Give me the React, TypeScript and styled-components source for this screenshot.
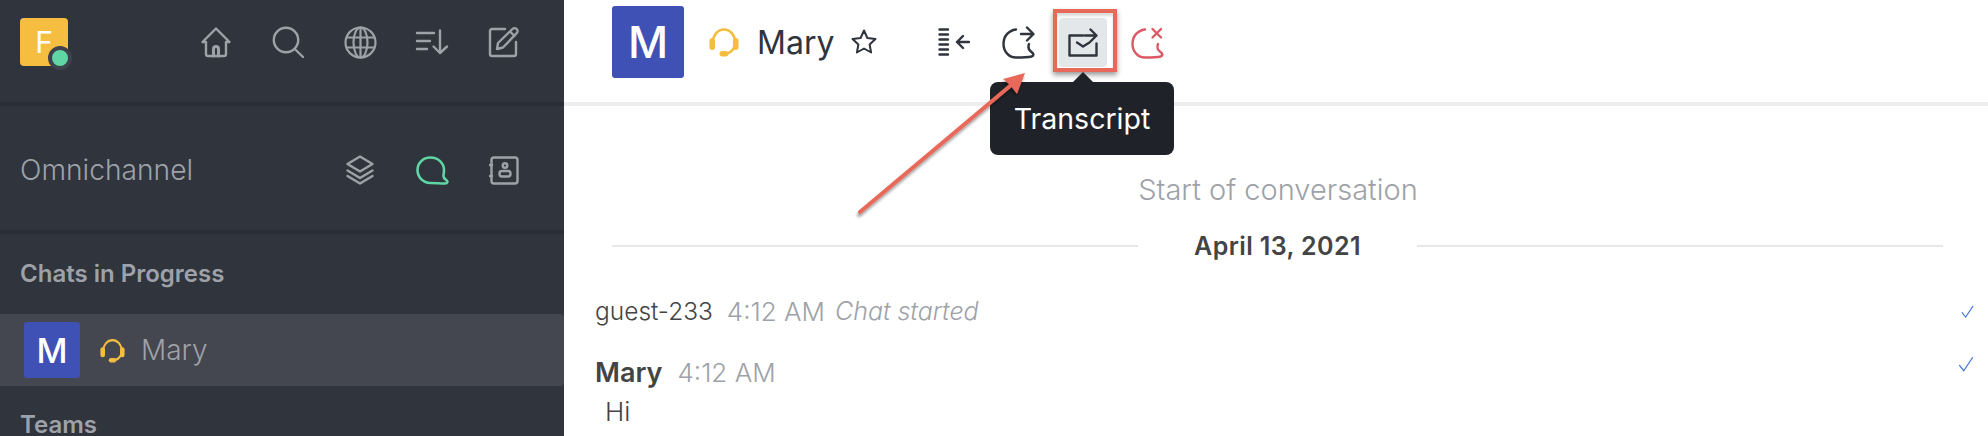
import React from "react";
import styled, { createGlobalStyle } from "styled-components";

const Global = createGlobalStyle`
  html, body { margin: 0; padding: 0; background: #fff; overflow: hidden; }
  body { font-family: Inter, "Liberation Sans", sans-serif; }
  * { box-sizing: border-box; }
`;

const Page = styled.div`
  position: relative;
  display: flex;
  width: 1988px;
  height: 436px;
  overflow: hidden;
`;

const Sidebar = styled.aside`
  width: 564px;
  flex: none;
  background: #30343d;
  color: #9ea2a8;
`;

const SideBar = styled.div<{ $h: number; $pt: number; $pb: number }>`
  height: ${(p) => p.$h}px;
  display: flex;
  align-items: center;
  justify-content: space-between;
  padding: ${(p) => p.$pt}px 42px ${(p) => p.$pb}px 20px;
  border-bottom: 4px solid #2a2d35;
`;

const IconRow = styled.div`
  display: flex;
  align-items: center;
  gap: 36px;
`;

const IconBox = styled.span<{ $c?: string }>`
  width: 36px;
  height: 36px;
  display: flex;
  align-items: center;
  justify-content: center;
  color: ${(p) => p.$c || "#9ea2a8"};
`;

const HeadsetSlot = styled.span<{ $ml: number; $mr: number }>`
  display: flex;
  flex: none;
  color: #f3bd3f;
  margin: 0 ${(p) => p.$mr}px 0 ${(p) => p.$ml}px;
`;

const Logo = styled.div`
  position: relative;
  width: 48px;
  height: 48px;
  border-radius: 4px;
  background: #f5be41;
  color: #fff;
  font-size: 30px;
  font-weight: 400;
  display: flex;
  align-items: center;
  justify-content: center;
`;

const StatusDot = styled.span`
  position: absolute;
  right: -4px;
  bottom: -4px;
  width: 24px;
  height: 24px;
  border-radius: 50%;
  background: #5fd6a4;
  border: 4px solid #3d424c;
`;

const SectionTitle = styled.h1`
  margin: 0;
  font-size: 28.2px;
  font-weight: 300;
  color: #9ea2a8;
`;

const GroupLabel = styled.div<{ $top: number }>`
  margin: ${(p) => p.$top}px 0 0 20px;
  font-size: 24px;
  line-height: 22px;
  font-weight: 600;
  color: #9ea2a8;
`;

const RoomRow = styled.div`
  height: 72px;
  margin-top: 29px;
  display: flex;
  align-items: center;
  padding-left: 24px;
  background: #444650;
  border-radius: 0 4px 4px 0;
  font-size: 28px;
  font-weight: 300;
  color: #9ea2a8;
`;

const Avatar = styled.div<{ $size: number; $font: number }>`
  width: ${(p) => p.$size}px;
  height: ${(p) => p.$size}px;
  flex: none;
  display: flex;
  align-items: center;
  justify-content: center;
  border-radius: 3px;
  background: #4051b5;
  color: #fff;
  font-size: ${(p) => p.$font}px;
  font-weight: 500;
`;

const Main = styled.main`
  flex: 1;
  min-width: 0;
  display: flex;
  flex-direction: column;
`;

const Header = styled.header`
  height: 106px;
  flex: none;
  display: flex;
  align-items: center;
  padding: 0 0 18px 48px;
  border-bottom: 4px solid #eceef0;
  color: #2f343d;
`;

const HeaderName = styled.span`
  margin-right: 17px;
  font-size: 32px;
  font-weight: 400;
`;

const Tools = styled.div`
  display: flex;
  align-items: center;
  gap: 16.5px;
  margin-left: 53px;
`;

const Tool = styled.button<{ $active?: boolean; $c?: string }>`
  width: 48px;
  height: 49px;
  padding: 0;
  display: flex;
  align-items: center;
  justify-content: center;
  position: relative;
  background: ${(p) => (p.$active ? "#e4e7ea" : "transparent")};
  border: 0;
  border-radius: 4px;
  color: ${(p) => p.$c || "#2f343d"};
`;

const Outline = styled.span`
  position: absolute;
  left: -6px;
  top: -9px;
  width: 64px;
  height: 63px;
  border: 4px solid #e8695a;
  box-shadow: 0 3px 5px rgba(0, 0, 0, 0.4), inset 0 3px 3px rgba(0, 0, 0, 0.15);
`;

const Tooltip = styled.div`
  position: absolute;
  left: 990px;
  top: 82px;
  width: 184px;
  height: 73px;
  display: flex;
  align-items: center;
  justify-content: center;
  background: #1f2329;
  border-radius: 8px;
  color: #fff;
  font-size: 28.5px;
  font-weight: 400;
  &::before {
    content: "";
    position: absolute;
    left: 81px;
    top: -10px;
    border: 12px solid transparent;
    border-top: 0;
    border-bottom-color: #1f2329;
  }
`;

const ArrowLayer = styled.svg`
  position: absolute;
  left: 0;
  top: 0;
  pointer-events: none;
`;

const Body = styled.section`
  flex: 1;
  padding: 0 13px 0 31px;
`;

const Start = styled.div`
  margin-top: 65px;
  text-align: center;
  padding-right: 14px;
  font-size: 29px;
  line-height: 38px;
  font-weight: 300;
  color: #9ea2a8;
`;

const DateRule = styled.div`
  margin: 17px 32px 0 17px;
  display: flex;
  align-items: center;
  gap: 56px;
  font-size: 25px;
  line-height: 40px;
  font-weight: 600;
  color: #444;
  letter-spacing: 0.4px;
  &::before,
  &::after {
    content: "";
    flex: 1;
    height: 2px;
    background: #e7e7e7;
  }
`;

const Line = styled.div<{ $top: number }>`
  margin-top: ${(p) => p.$top}px;
  display: flex;
  align-items: center;
  height: 36px;
  font-size: 24px;
  color: #444;
  font-weight: 300;
`;

const Name = styled.span<{ $bold?: boolean }>`
  font-weight: ${(p) => (p.$bold ? 600 : 300)};
  font-size: ${(p) => (p.$bold ? 27 : 24.5)}px;
  margin-right: ${(p) => (p.$bold ? 15 : 14)}px;
`;

const Time = styled.span`
  color: #9ea2a8;
  font-size: 26px;
  margin-right: 10px;
`;

const Italic = styled.span`
  color: #9ea2a8;
  font-size: 25px;
  font-style: italic;
`;

const Check = styled.span<{ $mb?: number }>`
  margin: 0 0 ${(p) => p.$mb || 0}px auto;
  display: flex;
  color: #3f74d6;
`;

const MsgText = styled.div`
  margin: 4px 0 0 10px;
  font-size: 26px;
  line-height: 36px;
  font-weight: 300;
  color: #444;
`;

const S = {
  fill: "none",
  stroke: "currentColor",
  strokeWidth: 2.4,
  strokeLinecap: "round" as const,
  strokeLinejoin: "round" as const,
};

const Home = () => (
  <svg width="32" height="32" viewBox="0 0 32 32" {...S}>
    <path d="M16 2.5 L29.5 16 H26 V28 a2 2 0 0 1 -2 2 H8 a2 2 0 0 1 -2 -2 V16 H2.5 Z" />
    <path d="M13.5 30 V23 a2.5 2.5 0 0 1 5 0 V30" strokeWidth={3} />
  </svg>
);
const Search = () => (
  <svg width="32" height="32" viewBox="0 0 32 32" {...S}>
    <circle cx="14" cy="14" r="12.2" />
    <path d="M22.8 23 L31 31" />
  </svg>
);
const Globe = () => (
  <svg width="33" height="33" viewBox="0 0 33 33" {...S} strokeWidth={2.2}>
    <circle cx="16.5" cy="16.5" r="15" />
    <ellipse cx="16.5" cy="16.5" rx="7" ry="15" />
    <path d="M3 11.5 H30 M3 21.5 H30 M16.5 1.5 V31.5" />
  </svg>
);
const Sort = () => (
  <svg width="34" height="26" viewBox="0 0 34 26" {...S}>
    <path d="M2 4 H19 M2 12 H15 M2 20 H12 M25 1.5 V24 M18.5 17.5 L25 24 L32 17.5" />
  </svg>
);
const Edit = () => (
  <svg width="32" height="32" viewBox="0 0 32 32" {...S}>
    <path d="M17 3 H4 a2 2 0 0 0 -2 2 V28 a2 2 0 0 0 2 2 H26 a2 2 0 0 0 2 -2 V16" />
    <path d="M9 23 L10 17 L24.5 3 a2.8 2.8 0 0 1 4.2 4.2 L15 21.5 Z M22 5.5 L26.5 10" />
  </svg>
);
const Layers = () => (
  <svg width="28" height="30" viewBox="0 0 28 30" {...S}>
    <path d="M14 1.5 L26.5 9 L14 16.5 L1.5 9 Z M1.5 15.5 L14 23 L26.5 15.5 M1.5 21 L14 28.5 L26.5 21" />
  </svg>
);
const Bubble = () => (
  <svg width="33" height="29" viewBox="0 0 33 29" {...S} strokeWidth={2.6}>
    <path d="M14.5 1.5 C6.5 1.5 1.5 7.5 1.5 14 C1.5 21 7 27 14.5 27 C19 27 24 27.5 29 27.5 C31.8 27.5 32 25.3 30.2 24 C28 22.5 27 21 27.5 19 C27.8 17.5 28 16 28 14 C28 7 22 1.5 14.5 1.5 Z" />
  </svg>
);
const Contacts = () => (
  <svg width="30" height="29" viewBox="0 0 30 29" {...S}>
    <rect x="2.5" y="1.5" width="26" height="26" rx="2.5" />
    <path d="M1 9 H3 M1 20 H3" strokeWidth={2.6} />
    <circle cx="16" cy="9.5" r="2.3" />
    <rect x="10.5" y="15" width="11" height="5.5" rx="2.5" />
  </svg>
);
const Headset = ({ size }: { size: number }) => (
  <svg width={size} height={size} viewBox="0 0 30 30">
    <path d="M4 15 C4 8 9 2.5 15 2.5 C21 2.5 26 8 26 15 C26 21 23 25 18 26.5" fill="none" stroke="currentColor" strokeWidth="2.6" />
    <rect x="0.5" y="11" width="5.5" height="12" rx="2.7" fill="currentColor" />
    <rect x="24" y="11" width="5.5" height="12" rx="2.7" fill="currentColor" />
    <rect x="10.5" y="24" width="9" height="5.5" rx="2.7" fill="currentColor" />
  </svg>
);
const Star = () => (
  <svg width="26" height="26" viewBox="0 0 26 26" {...S} strokeWidth={2}>
    <path d="M13 1.5 L16.4 9 L24.5 10 L18.6 15.5 L20.1 23.5 L13 19.5 L5.9 23.5 L7.4 15.5 L1.5 10 L9.6 9 Z" />
  </svg>
);
const ListBack = () => (
  <svg width="32" height="28" viewBox="0 0 32 28" {...S}>
    <path d="M1.5 1.5 H10 M1.5 6.5 H10 M1.5 11.5 H10 M1.5 16.5 H10 M1.5 21.5 H10 M1.5 26.5 H10" />
    <path d="M19 14 H31 M25 8 L19 14 L25 20" />
  </svg>
);
const ChatForward = () => (
  <svg width="34" height="33" viewBox="0 0 34 33" {...S}>
    <path d="M14 3.5 C6.5 4.5 1.5 10 1.5 18 C1.5 25.5 7 31.5 14 31.5 C19 31.5 25 31.5 29.5 30.5 C32.5 29.5 31.5 27.5 29.5 26 C26.5 24 25.5 22 27 18" />
    <path d="M19 8 H31 M25 1.5 L31.5 8 L25 14.5" />
  </svg>
);
const TranscriptIcon = () => (
  <svg width="30" height="29" viewBox="0 0 30 29" {...S}>
    <path d="M15 7.5 H1.5 V27.5 H28.5 V15.5" />
    <path d="M17 7.5 H28 M22.5 1.5 L28.5 7.5 L22.5 13.5" />
    <path d="M9 14.5 L15 18.5 L21.5 14.5" />
  </svg>
);
const ChatClose = () => (
  <svg width="34" height="33" viewBox="0 0 34 33" {...S}>
    <path d="M14 3.5 C6.5 4.5 1.5 10 1.5 18 C1.5 25.5 7 31.5 14 31.5 C19 31.5 25 31.5 29.5 30.5 C32.5 29.5 31.5 27.5 29.5 26 C26.5 24 25.5 22 27 18" />
    <path d="M21.5 3 L30 11.5 M30 3 L21.5 11.5" />
  </svg>
);
const Tick = ({ size }: { size: number }) => (
  <svg width={size} height={size} viewBox="0 0 16 16" fill="none" stroke="currentColor" strokeWidth="1.1">
    <path d="M2 9 L6 14 L14 2" />
  </svg>
);

export default function App() {
  return (
    <Page>
      <Global />
      <Sidebar>
        <SideBar $h={106} $pt={0} $pb={18}>
          <Logo>
            F
            <StatusDot />
          </Logo>
          <IconRow>
            <IconBox><Home /></IconBox>
            <IconBox><Search /></IconBox>
            <IconBox><Globe /></IconBox>
            <IconBox><Sort /></IconBox>
            <IconBox><Edit /></IconBox>
          </IconRow>
        </SideBar>
        <SideBar $h={128} $pt={4} $pb={0}>
          <SectionTitle>Omnichannel</SectionTitle>
          <IconRow>
            <IconBox><Layers /></IconBox>
            <IconBox $c="#5fd6a4"><Bubble /></IconBox>
            <IconBox><Contacts /></IconBox>
          </IconRow>
        </SideBar>
        <GroupLabel $top={29}>Chats in Progress</GroupLabel>
        <RoomRow>
          <Avatar $size={56} $font={34}>M</Avatar>
          <HeadsetSlot $ml={20} $mr={16}><Headset size={25} /></HeadsetSlot>
          Mary
        </RoomRow>
        <GroupLabel $top={28}>Teams</GroupLabel>
      </Sidebar>
      <Main>
        <Header>
          <Avatar $size={72} $font={44}>M</Avatar>
          <HeadsetSlot $ml={25} $mr={18}><Headset size={30} /></HeadsetSlot>
          <HeaderName>Mary</HeaderName>
          <Star />
          <Tools>
            <Tool aria-label="Members"><ListBack /></Tool>
            <Tool aria-label="Forward"><ChatForward /></Tool>
            <Tool $active aria-label="Transcript">
              <TranscriptIcon />
              <Outline />
            </Tool>
            <Tool $c="#dc5a66" aria-label="Close"><ChatClose /></Tool>
          </Tools>
        </Header>
        <Body>
          <Start>Start of conversation</Start>
          <DateRule>April 13, 2021</DateRule>
          <Line $top={27}>
            <Name>guest-233</Name>
            <Time>4:12 AM</Time>
            <Italic>Chat started</Italic>
            <Check><Tick size={15} /></Check>
          </Line>
          <Line $top={25}>
            <Name $bold>Mary</Name>
            <Time>4:12 AM</Time>
            <Check $mb={16}><Tick size={18} /></Check>
          </Line>
          <MsgText>Hi</MsgText>
        </Body>
      </Main>
      <Tooltip>Transcript</Tooltip>
      <ArrowLayer width="1988" height="436">
        <defs>
          <filter id="sh" x="-10%" y="-10%" width="120%" height="120%">
            <feDropShadow dx="-1" dy="3" stdDeviation="1.5" floodColor="#000" floodOpacity="0.4" />
          </filter>
        </defs>
        <g filter="url(#sh)">
          <path d="M860 212 L1010 86" stroke="#e8695a" strokeWidth="4" strokeLinecap="round" />
          <path d="M1025 73 L1003 79 L1010 85 L1017 94 Z" fill="#e8695a" />
        </g>
      </ArrowLayer>
    </Page>
  );
}
